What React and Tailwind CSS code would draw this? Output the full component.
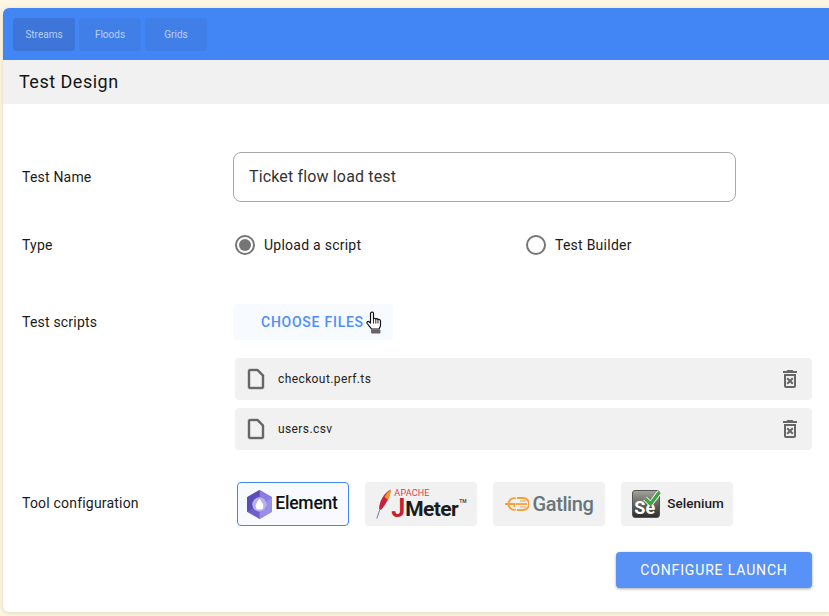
const tabs = ["Streams", "Floods", "Grids"];
const files = ["checkout.perf.ts", "users.csv"];

function FileIcon() {
  return (
    <svg viewBox="0 0 24 24" className="h-6 w-6 fill-[#666] stroke-[#666] stroke-[0.4]">
      <path d="M14 2H6c-1.1 0-1.99.9-1.99 2L4 20c0 1.1.89 2 1.99 2H18c1.1 0 2-.9 2-2V8l-6-6zM6 20V4h7l5 5v11H6z" />
    </svg>
  );
}

function TrashIcon() {
  return (
    <svg viewBox="0 0 24 24" className="h-6 w-6 fill-[#666]">
      <path d="M14.12 10.47L12 12.59l-2.13-2.12-1.41 1.41L10.59 14l-2.12 2.12 1.41 1.41L12 15.41l2.12 2.12 1.41-1.41L13.41 14l2.12-2.12zM15.5 4l-1-1h-5l-1 1H5v2h14V4zM6 19c0 1.1.9 2 2 2h8c1.1 0 2-.9 2-2V7H6v12zM8 9h8v10H8V9z" />
    </svg>
  );
}

function HandCursor() {
  return (
    <svg viewBox="0 0 16 23" className="absolute top-[7px] left-[133px] h-[23px] w-[16px]">
      <path
        d="M5 1.5 C6 0.6 7.5 1 7.5 2.5 V8 C8 7 9.5 7 9.8 8.2 C10.3 7.4 11.7 7.5 12 8.7 C12.6 8 14.3 8.4 14.5 10 V14 C14.5 16 13.5 17 13 18 H5.5 C4.5 16.2 2.8 14.5 1.2 12.5 C0.4 11.4 1.6 9.8 3 10.7 L4.5 12 V2.5 C4.5 2.1 4.7 1.8 5 1.5 Z"
        fill="#fff"
        stroke="#111"
        strokeWidth="1.2"
        strokeLinejoin="round"
      />
      <path d="M7.5 8 V12.5 M9.8 8.2 V12.5 M12 8.7 V12.5" stroke="#111" strokeWidth="0.9" fill="none" />
      <rect x="5" y="18.5" width="9.5" height="4" rx="1" fill="#666" />
    </svg>
  );
}

function Radio({ checked, label, className }) {
  return (
    <div className={`flex items-center gap-[9px] ${className}`}>
      <span className="flex h-5 w-5 items-center justify-center rounded-full border-2 border-[#757575]">
        {checked && <span className="h-[12px] w-[12px] rounded-full bg-[#757575]" />}
      </span>
      <span className="text-[14px] tracking-[0.25px] text-[#1a1a1a]">{label}</span>
    </div>
  );
}

function ElementLogo() {
  return (
    <div className="flex items-center gap-[3px] pr-[1px]">
      <svg viewBox="0 0 26 30" className="h-[29px] w-[25px]">
        <path d="M13 0 L26 7.5 V22.5 L13 30 L0 22.5 V7.5 Z" fill="#6d5fc9" />
        <path d="M13 0 L26 7.5 L20 11 L13 7 Z" fill="#8a7de0" />
        <path d="M0 7.5 L13 0 L13 7 L6 11 V19 L0 22.5 Z" fill="#5b4db8" />
        <path d="M13 30 L26 22.5 V7.5 L20 11 V19 L13 23 Z" fill="#9a8fe6" />
        <circle cx="13" cy="15" r="7.5" fill="#b9b0f2" />
        <path d="M13 9 C15.5 12.5 17 14.5 17 16.5 A4 4 0 0 1 9 16.5 C9 14.5 10.5 12.5 13 9 Z" fill="#fff" />
      </svg>
      <span className="text-[17.5px] font-medium leading-none tracking-[-0.2px] text-[#111]">Element</span>
    </div>
  );
}

function JMeterLogo() {
  return (
    <div className="flex h-[30px] items-start pl-[1px]">
      <svg viewBox="0 0 15 30" className="h-[30px] w-[15px]">
        <path d="M14.5 0.5 C15 7 10 15 5 21 L3 19.5 C3.5 12 8 4 14.5 0.5 Z" fill="#c8203f" />
        <path d="M14.5 0.5 C12 3 10 5 8.5 8 L11.5 10.5 C13.5 7.5 15 4 14.5 0.5 Z" fill="#f69923" />
        <path d="M4 20 L0.8 29.5" stroke="#8a6aa8" strokeWidth="1" fill="none" />
      </svg>
      <div className="flex flex-col items-start">
        <span className="ml-[3px] text-[9px] leading-[8px] tracking-[0.2px] text-[#d9434b]">APACHE</span>
        <div className="mt-[2px] flex items-start">
          <span className="text-[25px] font-bold leading-[20px] text-[#c8202f]">J</span>
          <span className="mt-[1px] text-[21px] font-bold leading-[18px] tracking-[-0.6px] text-[#1c1c1c]">Meter</span>
          <span className="mt-[-1px] ml-[1px] text-[5px] font-bold leading-[6px] text-[#555]">TM</span>
        </div>
      </div>
    </div>
  );
}

function GatlingLogo() {
  return (
    <div className="flex items-center gap-[4px]">
      <svg viewBox="0 0 24 16" className="h-[16px] w-[24px]" fill="none" stroke="#f7a13a" strokeWidth="1.8">
        <path d="M11 2.5 A5.8 5.8 0 1 0 11 13.5" />
        <path d="M0 8 H9.5 V11" />
        <path d="M12 2 H18 A6 6 0 0 1 18 14 H12" />
        <path d="M11 8 H22" />
        <path d="M15 5 H21 M15 11 H21" strokeWidth="1" />
      </svg>
      <span className="text-[20px] font-medium leading-none tracking-[-0.4px] text-[#68757c]">Gatling</span>
    </div>
  );
}

function SeleniumLogo() {
  return (
    <div className="flex items-center gap-[7px] pl-[2px]">
      <div className="relative flex h-[28px] w-[28px] items-end rounded-[3px] border border-[#555] bg-gradient-to-b from-[#a3a39a] to-[#2e2e2e] pl-[1px]">
        <span className="text-[18px] font-bold leading-[19px] text-white">Se</span>
        <svg viewBox="0 0 18 16" className="absolute top-[-1px] right-[-2px] h-[16px] w-[18px]">
          <path d="M2 8.5 L7.5 14 L16.5 2" fill="none" stroke="#fff" strokeWidth="5" />
          <path d="M2 8.5 L7.5 14 L16.5 2" fill="none" stroke="#3fa33f" strokeWidth="3.4" />
        </svg>
      </div>
      <span className="text-[13.5px] font-medium leading-none text-[#222]">Selenium</span>
    </div>
  );
}

export default function App() {
  return (
    <div className="h-[616px] overflow-hidden bg-[#fdf6e3] pt-2 pl-[3px] font-['Roboto',sans-serif]">
      <div className="h-[604px] overflow-hidden rounded-l-[6px] bg-white shadow-[0_1px_4px_rgba(120,110,80,0.25)]">
        <div className="flex h-[52px] items-start gap-[4px] bg-[#4285f4] pt-[10px] pl-[10px]">
          {tabs.map((t, i) => (
            <div
              key={t}
              className={`flex h-[33px] w-[62px] items-center justify-center rounded-[3px] text-[10px] text-[#b9d2fb] ${
                i === 0 ? "bg-[#3d75d8]" : "bg-[#417fe8]"
              }`}
            >
              {t}
            </div>
          ))}
        </div>
        <div className="flex h-[44px] items-center bg-[#f1f1f1] pb-[1px] pl-4 text-[18px] tracking-[0.5px] text-[#141414]">
          Test Design
        </div>

        <div className="pt-[48px] pr-[17px] pl-[19px]">
          <div className="flex h-[50px] items-center">
            <div className="w-[211px] text-[14px] tracking-[0.2px] text-[#1a1a1a]">Test Name</div>
            <div className="flex h-[50px] w-[503px] items-center rounded-[8px] border border-[#a8a8a8] pl-[15px] text-[16px] tracking-[0.15px] text-[#333]">
              Ticket flow load test
            </div>
          </div>

          <div className="mt-[33px] flex h-[20px] items-center">
            <div className="w-[213px] text-[14px] tracking-[0.2px] text-[#1a1a1a]">Type</div>
            <Radio checked label="Upload a script" className="w-[291px]" />
            <Radio label="Test Builder" />
          </div>

          <div className="mt-[49px] flex h-[36px] items-center">
            <div className="w-[211px] text-[14px] tracking-[0.2px] text-[#1a1a1a]">Test scripts</div>
            <div className="relative flex h-[36px] w-[160px] items-center justify-start rounded-[4px] bg-[#f7faff] pl-[28px] text-[14px] font-medium tracking-[0.75px] text-[#4f8ff7]">
              CHOOSE FILES
              <HandCursor />
            </div>
          </div>

          <div className="mt-[18px] ml-[213px] flex w-[577px] flex-col gap-2">
            {files.map((f) => (
              <div key={f} className="flex h-[42px] items-center rounded-[4px] bg-[#f1f1f1] pr-[10px] pl-[9px]">
                <FileIcon />
                <span className="ml-[10px] flex-1 text-[12px] tracking-[0.4px] text-[#222]">{f}</span>
                <TrashIcon />
              </div>
            ))}
          </div>

          <div className="mt-[32px] flex h-[44px] items-center">
            <div className="w-[215px] pb-[2px] text-[14px] tracking-[0.2px] text-[#1a1a1a]">Tool configuration</div>
            <div className="flex gap-4">
              <div className="flex h-[44px] w-[112px] items-center justify-center rounded-[4px] border border-[#4285f4] bg-[#f7faff]">
                <ElementLogo />
              </div>
              <div className="flex h-[44px] w-[112px] items-center justify-center rounded-[4px] bg-[#f1f1f1]">
                <JMeterLogo />
              </div>
              <div className="flex h-[44px] w-[112px] items-center justify-center rounded-[4px] bg-[#f1f1f1]">
                <GatlingLogo />
              </div>
              <div className="flex h-[44px] w-[112px] items-center justify-center rounded-[4px] bg-[#f1f1f1]">
                <SeleniumLogo />
              </div>
            </div>
          </div>

          <div className="mt-[26px] flex justify-end">
            <div className="flex h-[36px] w-[196px] items-center justify-center rounded-[4px] bg-[#5892f6] text-[14px] tracking-[0.85px] text-white shadow-[0_1px_3px_rgba(0,0,0,0.35)]">
              CONFIGURE LAUNCH
            </div>
          </div>
        </div>
      </div>
    </div>
  );
}
